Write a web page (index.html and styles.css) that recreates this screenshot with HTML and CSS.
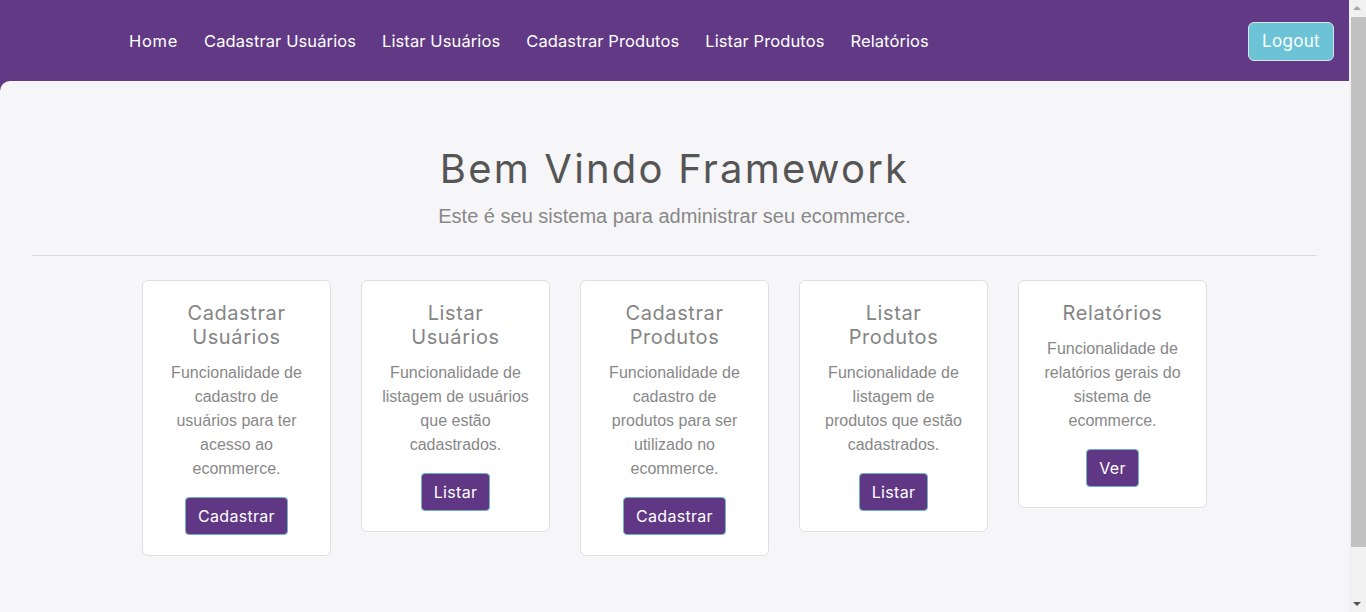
FILE: index.html
```html
<!DOCTYPE html>
<html lang="pt-br">
<head>
<meta charset="utf-8">
<title>Bem Vindo Framework</title>
<link rel="stylesheet" href="styles.css">
</head>
<body>
<div class="page">
  <header class="topbar">
    <nav class="menu">
      <a href="#" class="home">Home</a>
      <a href="#">Cadastrar Usuários</a>
      <a href="#">Listar Usuários</a>
      <a href="#">Cadastrar Produtos</a>
      <a href="#">Listar Produtos</a>
      <a href="#">Relatórios</a>
    </nav>
    <button class="logout">Logout</button>
  </header>
  <main class="content">
    <section class="hero">
      <h1>Bem Vindo Framework</h1>
      <p>Este é seu sistema para administrar seu ecommerce.</p>
    </section>
    <hr class="divider">
    <section class="cards">
      <div class="card">
        <h3>Cadastrar Usuários</h3>
        <p>Funcionalidade de cadastro de usuários para ter acesso ao ecommerce.</p>
        <button class="btn">Cadastrar</button>
      </div>
      <div class="card">
        <h3>Listar Usuários</h3>
        <p>Funcionalidade de listagem de usuários que estão cadastrados.</p>
        <button class="btn">Listar</button>
      </div>
      <div class="card">
        <h3>Cadastrar Produtos</h3>
        <p>Funcionalidade de cadastro de produtos para ser utilizado no ecommerce.</p>
        <button class="btn">Cadastrar</button>
      </div>
      <div class="card">
        <h3>Listar Produtos</h3>
        <p>Funcionalidade de listagem de produtos que estão cadastrados.</p>
        <button class="btn">Listar</button>
      </div>
      <div class="card">
        <h3>Relatórios</h3>
        <p>Funcionalidade de relatórios gerais do sistema de ecommerce.</p>
        <button class="btn">Ver</button>
      </div>
    </section>
  </main>
</div>
<div class="scrollbar" aria-hidden="true">
  <span class="arrow-up"></span>
  <span class="thumb"></span>
  <span class="arrow-down"></span>
</div>
</body>
</html>
```

FILE: styles.css
```css
* { box-sizing: border-box; }

html, body {
  margin: 0;
  padding: 0;
}

body {
  background: #613985;
  font-family: "Liberation Sans", Arial, sans-serif;
}

.page {
  width: 1349px;
}

.topbar {
  height: 81px;
  display: flex;
  align-items: center;
  justify-content: space-between;
  padding: 0 15px 0 129px;
}

.menu {
  display: flex;
  gap: 26px;
}

.menu a {
  color: #ffffff;
  text-decoration: none;
  font-family: Inter, "Open Sans", sans-serif;
  font-size: 16.5px;
  line-height: 24px;
  letter-spacing: 0.1px;
}

.menu .home {
  letter-spacing: 0.7px;
}

.logout {
  height: 39px;
  width: 86px;
  margin-top: 1px;
  background: #6cc3d5;
  color: #ffffff;
  border: 1px solid #d8e6ea;
  border-radius: 6px;
  font-family: Inter, "Open Sans", sans-serif;
  font-size: 17px;
  letter-spacing: 0.3px;
  padding: 0;
}

.content {
  background: #f6f6f8;
  border-top-left-radius: 10px;
  min-height: 586px;
  padding: 64px 32px 112px;
}

.hero {
  text-align: center;
}

.hero h1 {
  margin: 0;
  font-family: Inter, "Open Sans", sans-serif;
  font-weight: 400;
  font-size: 40px;
  line-height: 48px;
  letter-spacing: 2.2px;
  color: #555555;
}

.hero p {
  margin: 11px 0 0;
  font-size: 20px;
  line-height: 24px;
  color: #888888;
}

.divider {
  margin: 27px 0 24px;
  border: 0;
  border-top: 1px solid #dcdcdc;
}

.cards {
  display: flex;
  justify-content: center;
  align-items: flex-start;
  gap: 30px;
}

.card {
  width: 189px;
  background: #ffffff;
  border: 1px solid #dfdfdf;
  border-radius: 6px;
  padding: 20px;
  text-align: center;
}

.card h3 {
  margin: 0 0 12px;
  font-family: Inter, "Open Sans", sans-serif;
  font-weight: 400;
  font-size: 20px;
  line-height: 24px;
  letter-spacing: 0.6px;
  color: #858585;
}

.card p {
  margin: 0 0 16px;
  font-size: 16px;
  line-height: 24px;
  color: #888888;
}

.btn {
  height: 38px;
  background: #5f3784;
  color: #ffffff;
  border: 1px solid #6fb7b9;
  border-radius: 4px;
  padding: 0 12px;
  font-family: Inter, "Open Sans", sans-serif;
  font-size: 16px;
  letter-spacing: 0.3px;
  line-height: 24px;
}

.scrollbar {
  position: fixed;
  top: 0;
  right: 0;
  width: 17px;
  height: 100vh;
  background: #f1f1f1;
}

.thumb {
  position: absolute;
  top: 17px;
  left: 2px;
  width: 15px;
  height: 530px;
  background: #c1c1c1;
}

.arrow-up,
.arrow-down {
  position: absolute;
  left: 4px;
  width: 0;
  height: 0;
  border-left: 4.5px solid transparent;
  border-right: 4.5px solid transparent;
}

.arrow-up {
  top: 6px;
  border-bottom: 4.5px solid #a3a3a3;
}

.arrow-down {
  bottom: 6px;
  border-top: 4.5px solid #505050;
}
```
